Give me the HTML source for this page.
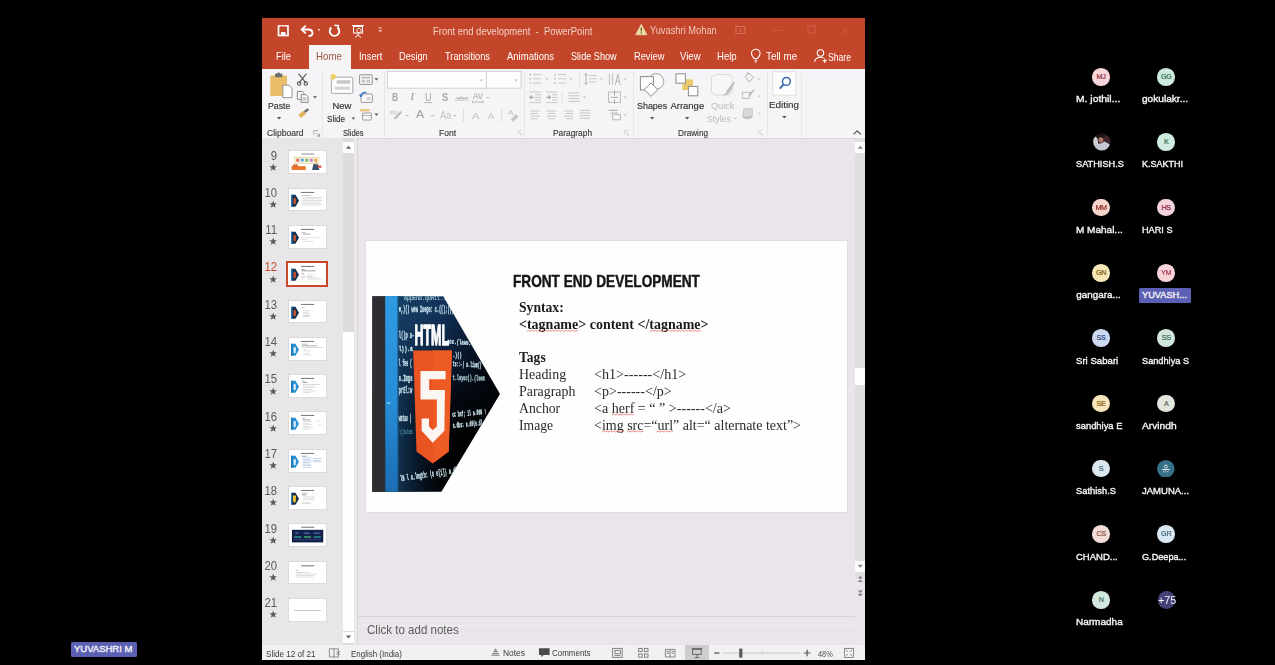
<!DOCTYPE html>
<html>
<head>
<meta charset="utf-8">
<title>Meeting</title>
<style>
html,body{margin:0;padding:0;background:#000;}
body{width:1275px;height:665px;overflow:hidden;position:relative;font-family:"Liberation Sans",sans-serif;}
.abs{position:absolute;}
.t{position:absolute;white-space:nowrap;line-height:1;transform-origin:0 50%;}
#win{position:absolute;left:262.4px;top:18.2px;width:602.6px;height:641.6px;background:#e9e5ea;overflow:hidden;filter:blur(0.5px);}
#titlebar{position:absolute;left:0;top:0;width:603px;height:50.6px;background:#c4462a;}
#hometab{position:absolute;left:47px;top:26.4px;width:41.6px;height:25px;background:#f6f4f5;}
#ribbon{position:absolute;left:0;top:50.6px;width:603px;height:69.4px;background:linear-gradient(#f4f5f8,#f6f4f6 40%);border-bottom:1px solid #dad7da;}
.tab{color:#fff;font-size:10.5px;}
.rl{color:#333;-webkit-text-stroke:0.15px #333;font-size:9.5px;}
.rlg{color:#b3b0b0;font-size:9.5px;}
.gl{color:#444;font-size:9px;}
.sep{position:absolute;top:54px;width:1px;height:64px;background:#dcdadb;}
.num{position:absolute;color:#606060;font-size:12px;line-height:1;}
.star{position:absolute;color:#666;font-size:9px;line-height:1;}
.th{position:absolute;left:27px;width:36px;height:20px;background:#fff;border:1px solid #d8d8d8;box-sizing:border-box;overflow:hidden;}
.st{position:absolute;color:#333;font-size:8.5px;line-height:1;white-space:nowrap;}
.pn{position:absolute;color:#fff;font-size:10px;line-height:1;white-space:nowrap;font-weight:bold;letter-spacing:0.1px;}
.av{position:absolute;width:18px;height:18px;border-radius:50%;font-size:6px;line-height:18px;text-align:center;color:#555;}
.serif{font-family:"Liberation Serif",serif;}
u{text-decoration:underline wavy #e0443a;text-decoration-thickness:0.8px;text-underline-offset:1.5px;}
</style>
</head>
<body>

<div id="win">
  <div id="titlebar"></div>
  <div id="hometab"></div>
  <div id="ribbon"></div>
  
  <!-- title bar icons -->
  <svg class="abs" style="left:0;top:0" width="603" height="50" viewBox="0 0 603 50">
    <!-- save -->
    <g fill="none" stroke="#fff" stroke-width="1.7">
      <rect x="16.5" y="8" width="9.5" height="9.5"/>
      <rect x="19" y="14" width="4.5" height="3.5" fill="#fff" stroke="none"/>
      <rect x="18" y="8.5" width="6.5" height="3" fill="#c3452a" stroke="none"/>
    </g>
    <!-- undo -->
    <path d="M40.5 11.5 L46 11.5 Q50.5 11.5 50.5 15 Q50.5 18 46.5 18" fill="none" stroke="#fff" stroke-width="1.9"/>
    <path d="M43.8 7.6 L39.8 11.5 L43.8 15.4" fill="none" stroke="#fff" stroke-width="1.9"/>
    <path d="M55.5 11 L58.5 11 L57 13 Z" fill="#f3d6cf"/>
    <!-- redo circle -->
    <path d="M75.6 9.4 A4.8 4.8 0 1 1 69.4 9.4" fill="none" stroke="#fff" stroke-width="1.9"/>
    <path d="M72.4 7.2 L76.4 7.6 L75.8 11.4" fill="none" stroke="#fff" stroke-width="1.6"/>
    <!-- present -->
    <g stroke="#fff" fill="none" stroke-width="1">
      <path d="M90 7.5 H102"/>
      <rect x="91.5" y="8.5" width="9" height="6.5"/>
      <path d="M96 15 V17 M93 19.5 L96 17 L99 19.5"/>
      <circle cx="97" cy="12.5" r="2.2" stroke-width="0.8"/>
    </g>
    <path d="M116.5 12 L120 12 L118.2 14.2 Z" fill="#f1cfc6"/>
    <rect x="116.5" y="9.5" width="3.5" height="1" fill="#f1cfc6"/>
    <!-- warning -->
    <path d="M379.3 6.2 L385 16.8 L373.6 16.8 Z" fill="#eadfa6" stroke="#f3e9c8" stroke-width="0.5"/>
    <rect x="378.7" y="9.5" width="1.3" height="4" fill="#7a5a28"/>
    <rect x="378.7" y="14.3" width="1.3" height="1.3" fill="#7a5a28"/>
    <!-- window buttons (faint) -->
    <g stroke="#d4705a" fill="none" stroke-width="1">
      <rect x="474" y="8.5" width="9" height="7"/>
      <path d="M478.5 10.5 V14"/>
      <path d="M511 12.5 H520" stroke="#cc5a42"/>
      <rect x="546" y="8" width="7" height="7" stroke="#cf6048"/>
      <path d="M580 9.5 L586 15.5 M586 9.5 L580 15.5" stroke="#cc5a42"/>
    </g>
    <!-- bulb -->
    <g stroke="#fff" fill="none" stroke-width="1.1">
      <path d="M492.2 40.5 Q489.5 38 489.5 35.5 A4.3 4.3 0 0 1 498.1 35.5 Q498.1 38 495.4 40.5 Z"/>
      <path d="M492.4 42.3 H495.2 M492.8 44 H494.8"/>
    </g>
    <!-- share person -->
    <g stroke="#fff" fill="none" stroke-width="1.1">
      <circle cx="558.5" cy="35" r="3.2"/>
      <path d="M552.5 44 Q553.5 39.2 558.5 39.2 Q560.5 39.2 561.5 40"/>
      <path d="M562.8 40.5 V45 M560.5 42.7 H565"/>
    </g>
  </svg>
  <span class="t" id="tt1" style="left:171px;top:8.7px;font-size:10px;transform:scaleX(0.946);color:#f3cfc6;">Front end development&nbsp; -&nbsp; PowerPoint</span>
  <span class="t" id="tt2" style="left:388px;top:8.3px;font-size:10px;transform:scaleX(0.931);color:#f0c8bd;">Yuvashri Mohan</span>
  <span class="t" id="tb1" style="left:14px;top:32.8px;font-size:10.5px;transform:scaleX(0.882);color:#fff;">File</span>
  <span class="t" id="tb2" style="left:54px;top:32.8px;font-size:10.5px;transform:scaleX(0.929);color:#9c5444;">Home</span>
  <span class="t" id="tb3" style="left:97px;top:32.8px;font-size:10.5px;transform:scaleX(0.885);color:#fff;">Insert</span>
  <span class="t" id="tb4" style="left:137px;top:32.8px;font-size:10.5px;transform:scaleX(0.879);color:#fff;">Design</span>
  <span class="t" id="tb5" style="left:183px;top:32.8px;font-size:10.5px;transform:scaleX(0.882);color:#fff;">Transitions</span>
  <span class="t" id="tb6" style="left:245px;top:32.8px;font-size:10.5px;transform:scaleX(0.904);color:#fff;">Animations</span>
  <span class="t" id="tb7" style="left:309px;top:32.8px;font-size:10.5px;transform:scaleX(0.868);color:#fff;">Slide Show</span>
  <span class="t" id="tb8" style="left:372px;top:32.8px;font-size:10.5px;transform:scaleX(0.882);color:#fff;">Review</span>
  <span class="t" id="tb9" style="left:418px;top:32.8px;font-size:10.5px;transform:scaleX(0.913);color:#fff;">View</span>
  <span class="t" id="tb10" style="left:455px;top:32.8px;font-size:10.5px;transform:scaleX(0.909);color:#fff;">Help</span>
  <span class="t" id="tb11" style="left:504px;top:32.8px;font-size:10.5px;transform:scaleX(0.939);color:#fff;">Tell me</span>
  <span class="t" id="tb12" style="left:566px;top:33.8px;font-size:10.5px;transform:scaleX(0.821);color:#fff;">Share</span>
  
  <!-- ribbon icons: drawn in absolute page coords, shifted by window origin -->
  <svg class="abs" style="left:0;top:0" width="603" height="125" viewBox="262 18 603 125">
    <g id="clip">
      <rect x="270.2" y="75.5" width="16.8" height="20.5" rx="1" fill="#e9bf6b"/>
      <rect x="275" y="73.6" width="7.4" height="3.6" rx="1" fill="#6f6f6f"/>
      <rect x="277.4" y="72.6" width="2.6" height="2" rx="1" fill="#6f6f6f"/>
      <path d="M282.8 85.2 H289 L292 88.2 V97.6 H282.8 Z" fill="#fff" stroke="#8c8c8c" stroke-width="0.9"/>
      <path d="M276.8 117 L281.2 117 L279 119.4 Z" fill="#555"/>
      <!-- scissors -->
      <g stroke="#5a5a5a" fill="none" stroke-width="1.1">
        <path d="M298.6 73.6 L305.8 82.8 M306.4 73.6 L299.2 82.8"/>
        <circle cx="299.2" cy="83.6" r="1.7"/><circle cx="305.8" cy="83.6" r="1.7"/>
      </g>
      <!-- copy -->
      <g stroke="#7a7a7a" fill="#fbfbfb" stroke-width="0.9">
        <path d="M297.4 91.4 H302.2 L304 93.2 V99.4 H297.4 Z"/>
        <path d="M301.2 94.6 H306 L308 96.6 V102.4 H301.2 Z"/>
        <path d="M302.6 98 H306.4 M302.6 100 H306.4" stroke-width="0.7"/>
      </g>
      <path d="M313 96.2 L317 96.2 L315 98.6 Z" fill="#555"/>
      <!-- format painter -->
      <path d="M298.4 114.6 L303.6 110.8 L306 114 L300.8 118 Z" fill="#e4b55f"/>
      <path d="M303.8 111 L307.6 108.2 L309 110 L305.4 113 Z" fill="#6a6a6a"/>
      <!-- launcher -->
      <path d="M313.8 130.6 H318.4 M313.8 130.6 V135" stroke="#9a9a9a" stroke-width="0.8" fill="none"/>
      <path d="M316.2 133 L319.4 136 M319.6 133.6 V136.2 H317" stroke="#8a8a8a" stroke-width="0.8" fill="none"/>
    </g>
    <g id="slidesg">
      <rect x="331.4" y="77.2" width="21.4" height="16.2" rx="1.2" fill="#fdfdfd" stroke="#a9a9a9" stroke-width="1"/>
      <rect x="336.6" y="80.2" width="13.6" height="3.6" fill="#c9c9c9"/>
      <rect x="334.6" y="86.6" width="15.6" height="3.2" fill="#d6d6d6"/>
      <path d="M333.2 72.6 L334.2 75 L336.8 74.4 L335.4 76.6 L337 78.6 L334.4 78.6 L333.2 81 L332.2 78.6 L329.6 78.6 L331.2 76.6 L329.8 74.4 L332.4 75 Z" fill="#ecd064"/>
      <path d="M351.6 117.6 L355.2 117.6 L353.4 119.8 Z" fill="#555"/>
      <!-- layout -->
      <rect x="359.6" y="74.8" width="12.6" height="9.6" rx="0.8" fill="#fbfbfb" stroke="#8e8e8e" stroke-width="1"/>
      <rect x="361.6" y="76.8" width="8.6" height="1.6" fill="#b5b5b5"/>
      <rect x="361.6" y="79.6" width="3.6" height="3" fill="#c5c5c5"/><rect x="366.4" y="79.6" width="3.8" height="3" fill="#c5c5c5"/>
      <path d="M374.4 78.2 L378.4 78.2 L376.4 80.6 Z" fill="#555"/>
      <!-- reset -->
      <rect x="361" y="94" width="11.4" height="8.4" rx="0.8" fill="#fbfbfb" stroke="#9a9a9a" stroke-width="1"/>
      <rect x="366.4" y="96.8" width="4.4" height="3.4" fill="#d5d5d5"/>
      <path d="M360.6 96.4 Q361.4 91.8 366.6 92.6" stroke="#3d7ec4" stroke-width="1.4" fill="none"/>
      <path d="M358.8 94.4 L360.6 97.6 L363.2 95.2 Z" fill="#3d7ec4"/>
      <!-- section -->
      <rect x="359.8" y="109.2" width="10" height="2.2" fill="#e8c57a"/>
      <rect x="362.6" y="113" width="8.8" height="7" rx="0.6" fill="#fbfbfb" stroke="#9a9a9a" stroke-width="1"/>
      <path d="M362.6 115.6 H371.4" stroke="#9a9a9a" stroke-width="0.8"/>
      <path d="M374.4 113.6 L378.4 113.6 L376.4 116 Z" fill="#555"/>
    </g>
    <g id="fontg">
      <rect x="387.4" y="71.4" width="99" height="16.8" fill="#fefefe" stroke="#d2d0d0" stroke-width="1"/>
      <rect x="486.4" y="71.4" width="34.6" height="16.8" fill="#fefefe" stroke="#d2d0d0" stroke-width="1"/>
      <path d="M479.6 79.4 L483 79.4 L481.3 81.4 Z" fill="#bdbdbd"/>
      <path d="M514.4 79.4 L517.8 79.4 L516.1 81.4 Z" fill="#bdbdbd"/>
      <path d="M457 98.4 H467.6" stroke="#b4b4b4" stroke-width="0.9"/>
      <path d="M472.6 102 H483 M472.6 100.6 V103.4 M483 100.6 V103.4" stroke="#a8a8a8" stroke-width="0.8" fill="none"/>
      <path d="M486.2 97.6 H489.6" stroke="#c4c4c4" stroke-width="1"/>
      <path d="M424.4 102.6 H432.4" stroke="#b0b0b0" stroke-width="0.9"/>
      <!-- highlighter -->
      <path d="M393.4 118.6 L400.6 111 L402 112.6 L395.8 119.2 Z" fill="#b9b9b9"/>
      <path d="M405.6 115.6 H408.6 M430.6 115.6 H434 M453.6 115.6 H456.2" stroke="#bdbdbd" stroke-width="1"/>
      <path d="M463.4 109 V122 M501.6 109 V122" stroke="#dedcdc" stroke-width="1"/>
      <path d="M510.6 119.6 L516 114 L518.6 116.4 L513.4 122 Z" fill="#c9c9c9"/>
      <path d="M518.4 130.6 H521.4 M518.4 130.6 V134" stroke="#c8c8c8" stroke-width="0.8" fill="none"/>
      <path d="M520 133 L522.4 135.4" stroke="#bbb" stroke-width="0.9"/>
    </g>
  </svg>
  <div class="abs" id="pg" style="left:-262px;top:-18px;width:0;height:0;">
  <span class="t" id="rl1" style="left:268px;top:100.8px;font-size:9.5px;transform:scaleX(0.917);color:#333;-webkit-text-stroke:0.15px #333;">Paste</span>
  <span class="t" id="rl2" style="left:267px;top:129.0px;font-size:9px;transform:scaleX(0.949);color:#3a3a3a;-webkit-text-stroke:0.15px #3a3a3a;">Clipboard</span>
  <span class="t" id="rl3" style="left:332px;top:100.8px;font-size:9.5px;transform:scaleX(1.000);color:#333;-webkit-text-stroke:0.15px #333;">New</span>
  <span class="t" id="rl4" style="left:327px;top:113.8px;font-size:9.5px;transform:scaleX(0.857);color:#333;-webkit-text-stroke:0.15px #333;">Slide</span>
  <span class="t" id="rl5" style="left:343px;top:129.0px;font-size:9px;transform:scaleX(0.840);color:#3a3a3a;-webkit-text-stroke:0.15px #3a3a3a;">Slides</span>
  <span class="t" id="rl6" style="left:439px;top:129.0px;font-size:9px;transform:scaleX(0.944);color:#3a3a3a;-webkit-text-stroke:0.15px #3a3a3a;">Font</span>
  <span class="t" id="fb1" style="left:391.9px;top:92.1px;font-size:11.4px;transform:scaleX(0.738);color:#a9a9a9;font-weight:bold;">B</span>
  <span class="t" id="fb2" style="left:410px;top:92.8px;font-size:9.5px;transform:scaleX(1.000);color:#a9a9a9;font-style:italic;font-family:'Liberation Serif',serif;font-weight:bold;">I</span>
  <span class="t" id="fb3" style="left:424.6px;top:91.9px;font-size:11px;transform:scaleX(0.850);color:#a9a9a9;">U</span>
  <span class="t" id="fb4" style="left:441.5px;top:92.6px;font-size:10px;transform:scaleX(0.929);color:#a9a9a9;font-weight:bold;">S</span>
  <span class="t" id="fb5" style="left:455px;top:94.6px;font-size:8px;transform:scaleX(1.077);color:#bcbcbc;">abc</span>
  <span class="t" id="fb6" style="left:472.6px;top:91.8px;font-size:8.5px;transform:scaleX(0.945);color:#a4a4a4;">AV</span>
  <span class="t" id="fb7" style="left:390px;top:108.6px;font-size:6px;transform:scaleX(0.800);color:#b8b8b8;">aby</span>
  <span class="t" id="fb8" style="left:416px;top:108.8px;font-size:11.5px;transform:scaleX(1.075);color:#9e9e9e;">A</span>
  <span class="t" id="fb9" style="left:439.6px;top:110.6px;font-size:10px;transform:scaleX(0.917);color:#c2c2c2;">Aa</span>
  <span class="t" id="fb10" style="left:471.4px;top:111.2px;font-size:9.5px;transform:scaleX(1.167);color:#b4b4b4;">A</span>
  <span class="t" id="fb11" style="left:488px;top:112.2px;font-size:8.5px;transform:scaleX(1.100);color:#b8b8b8;">A</span>
  <span class="t" id="fb12" style="left:508px;top:108.8px;font-size:7.5px;transform:scaleX(1.120);color:#bdbdbd;">A</span>
  <span class="t" id="rl7" style="left:553px;top:129.0px;font-size:9px;transform:scaleX(0.929);color:#3a3a3a;-webkit-text-stroke:0.15px #3a3a3a;">Paragraph</span>
  <span class="t" id="rl8" style="left:678px;top:129.0px;font-size:9px;transform:scaleX(0.909);color:#3a3a3a;-webkit-text-stroke:0.15px #3a3a3a;">Drawing</span>
  <span class="t" id="rl9" style="left:637px;top:100.8px;font-size:9.5px;transform:scaleX(0.938);color:#333;-webkit-text-stroke:0.15px #333;">Shapes</span>
  <span class="t" id="rl10" style="left:670px;top:100.8px;font-size:9.5px;transform:scaleX(1.000);color:#333;-webkit-text-stroke:0.15px #333;">Arrange</span>
  <span class="t" id="rl11" style="left:711px;top:100.8px;font-size:9.5px;transform:scaleX(0.958);color:#bdbbbb;">Quick</span>
  <span class="t" id="rl12" style="left:707px;top:113.8px;font-size:9.5px;transform:scaleX(0.923);color:#bdbbbb;">Styles</span>
  <span class="t" id="rl13" style="left:769px;top:99.8px;font-size:9.5px;transform:scaleX(1.034);color:#333;-webkit-text-stroke:0.15px #333;">Editing</span>
  <!--RIBBONTEXT-->
  </div>

  <svg class="abs" style="left:0;top:0" width="603" height="125" viewBox="262 18 603 125">
    <g id="parag" stroke="#c3c3c3" stroke-width="0.9" fill="none">
      <!-- bullets -->
      <path d="M533 74.6 H541.2 M533 78.8 H541.2 M533 83 H541.2"/>
      <path d="M529.6 74.6 H531 M529.6 78.8 H531 M529.6 83 H531" stroke="#b0b0b0" stroke-width="1.2"/>
      <path d="M545.6 78.4 L548.6 78.4 L547.1 80.2 Z" fill="#c4c4c4" stroke="none"/>
      <!-- numbering -->
      <path d="M558 74.6 H566.4 M558 78.8 H566.4 M558 83 H566.4"/>
      <path d="M555 73.6 V75.8 M555 77.8 V80 M555 82 V84.2" stroke="#b5b5b5" stroke-width="1"/>
      <path d="M569.6 78.4 L572.6 78.4 L571.1 80.2 Z" fill="#c4c4c4" stroke="none"/>
      <path d="M579.6 72 V87 M562 91 V103" stroke="#e3e1e1" stroke-width="1"/>
      <!-- line spacing -->
      <path d="M589 75.6 H596.4 M589 78.8 H596.4 M589 82 H596.4"/>
      <path d="M586 73.6 V84.4 M584.6 75.2 L586 73.6 L587.4 75.2 M584.6 82.8 L586 84.4 L587.4 82.8" stroke="#a8a8a8"/>
      <path d="M600 78.4 L603 78.4 L601.5 80.2 Z" fill="#c4c4c4" stroke="none"/>
      <!-- text direction -->
      <path d="M609.4 73.4 V85 M612.6 73.4 V85" stroke="#b8b8b8"/>
      <path d="M615.4 85 L617.8 74.2 L620.2 85 M616.2 81.4 H619.4" stroke="#b0b0b0"/>
      <path d="M623.4 78.4 L626.4 78.4 L624.9 80.2 Z" fill="#c4c4c4" stroke="none"/>
      <!-- indents -->
      <path d="M529.6 92 H541 M535 94.8 H541 M535 97.4 H541 M535 100 H541 M529.6 102.6 H541"/>
      <path d="M534 97.2 H530 M531.8 95.4 L530 97.2 L531.8 99" stroke="#a5a5a5" stroke-width="1.1"/>
      <path d="M545.8 92 H557.4 M552 94.8 H557.4 M552 97.4 H557.4 M552 100 H557.4 M545.8 102.6 H557.4"/>
      <path d="M546 97.2 H550.4 M548.6 95.4 L550.4 97.2 L548.6 99" stroke="#a5a5a5" stroke-width="1.1"/>
      <!-- align dropdown -->
      <path d="M568.4 93 H579.4 M568.4 95.8 H579.4 M568.4 98.6 H579.4 M568.4 101.4 H579.4"/>
      <path d="M583 96.6 L586 96.6 L584.5 98.4 Z" fill="#c4c4c4" stroke="none"/>
      <!-- align text -->
      <rect x="608.6" y="92" width="11.8" height="10.4" stroke="#b4b4b4"/>
      <path d="M614.5 90.6 V95.4 M614.5 104 V99.4 M611 97.4 H618" stroke="#a0a0a0"/>
      <path d="M623.4 96.6 L626.4 96.6 L624.9 98.4 Z" fill="#c4c4c4" stroke="none"/>
      <!-- row 3 aligns -->
      <path d="M530.4 111 H540 M530.4 113.6 H537.6 M530.4 116.2 H540 M530.4 118.8 H537.6"/>
      <path d="M546.4 111 H556.6 M548 113.6 H555 M546.4 116.2 H556.6 M548 118.8 H555"/>
      <path d="M563.6 111 H573 M566 113.6 H573 M563.6 116.2 H573 M566 118.8 H573"/>
      <path d="M579.4 110.4 H590 M579.4 113 H590 M579.4 115.6 H590 M579.4 118.2 H590"/>
      <!-- smartart -->
      <path d="M608.6 110.4 H617.6 M610.4 113 H617.6" stroke="#b8b8b8" stroke-width="1.1"/>
      <rect x="612.6" y="114.4" width="7.8" height="5.4" stroke="#b4b4b4" fill="#f8f8f8"/>
      <path d="M623.4 114.4 L626.4 114.4 L624.9 116.2 Z" fill="#c4c4c4" stroke="none"/>
      <path d="M624.6 130.6 H628.2 M624.6 130.6 V134" stroke="#cacaca" stroke-width="0.8"/>
      <path d="M626.4 133 L629 135.6" stroke="#bbb"/>
    </g>
    <g id="drawg">
      <circle cx="656" cy="81.4" r="7.8" fill="#fbfbfb" stroke="#a2a2a2" stroke-width="1"/>
      <rect x="640.4" y="76.6" width="13" height="13.4" fill="#fcfcfc" stroke="#8a8a8a" stroke-width="1"/>
      <path d="M651 83 L657.8 89.6 L651 96.4 L644.2 89.6 Z" fill="#fdfdfd" stroke="#8a8a8a" stroke-width="1"/>
      <path d="M650 117 L654.4 117 L652.2 119.4 Z" fill="#555"/>
      <!-- arrange -->
      <rect x="682.4" y="79.4" width="10.6" height="10.6" fill="#ecc968"/>
      <rect x="676" y="73.8" width="9.4" height="9.4" fill="#fdfdfd" stroke="#8e8e8e" stroke-width="1"/>
      <rect x="688.4" y="86.4" width="9.4" height="9.4" fill="#fdfdfd" stroke="#8e8e8e" stroke-width="1"/>
      <path d="M685 117 L689.4 117 L687.2 119.4 Z" fill="#555"/>
      <!-- quick styles -->
      <rect x="711.4" y="74.6" width="21" height="20.4" rx="4.5" fill="#f7f6f6" stroke="#dad8d8" stroke-width="1"/>
      <path d="M722.4 95.6 Q726 93.4 727.6 89.6 L733.6 81.4 L735 82.6 L730.4 91.6 Q728 95.4 722.4 95.6 Z" fill="#c2c0c0"/>
      <path d="M733.8 117.8 L736.8 117.8 L735.3 119.6 Z" fill="#c0c0c0"/>
      <!-- fill / outline / effects -->
      <path d="M745.4 76.6 L749 73 L753.6 77.6 L749 82 Z" fill="none" stroke="#b4b4b4" stroke-width="1"/>
      <path d="M747.4 72 V75" stroke="#b4b4b4" stroke-width="1"/>
      <path d="M742.4 92.4 H751.4 L749 98.4 H742.4 Z" fill="none" stroke="#bcbcbc" stroke-width="1"/>
      <path d="M748 95 L753.6 89 L754.8 90.2 L749.6 96.4 Z" fill="#c0c0c0"/>
      <path d="M744 108.6 H752.4 V115.6 Q747 119.6 742.6 115.6 Z" fill="#d8d8d8" stroke="#c4c4c4" stroke-width="0.8"/>
      <path d="M742.6 115.6 Q747 118 752.4 115.6 V117.4 Q747 120.6 742.6 117.4 Z" fill="#bdbdbd"/>
      <path d="M757.6 78.4 L760.6 78.4 L759.1 80.2 Z M757.6 95.4 L760.6 95.4 L759.1 97.2 Z M757.6 112.8 L760.6 112.8 L759.1 114.6 Z" fill="#c6c6c6"/>
      <path d="M758.4 130.6 H762 M758.4 130.6 V134" stroke="#cacaca" stroke-width="0.8" fill="none"/>
      <path d="M760.2 133 L762.8 135.6" stroke="#bbb" stroke-width="0.9"/>
      <!-- editing -->
      <rect x="772.8" y="71.8" width="23.2" height="23.4" fill="#fefefe" stroke="#e0dede" stroke-width="1"/>
      <circle cx="786.4" cy="81.4" r="3.9" fill="none" stroke="#3a6aa8" stroke-width="1.5"/>
      <path d="M783.6 84.4 L779.8 88.6" stroke="#3a6aa8" stroke-width="1.9"/>
      <path d="M782.2 116 L786.6 116 L784.4 118.4 Z" fill="#555"/>
      <path d="M853.6 134.4 L857.2 130.8 L860.8 134.4" fill="none" stroke="#555" stroke-width="1.2"/>
    </g>
    <g stroke="#e8e6e6" stroke-width="1">
      <path d="M322.5 72 V137 M384.5 72 V137 M524.5 72 V137 M633.5 72 V137 M767.5 72 V137 M801.5 72 V137"/>
    </g>
  </svg>
  <!--RIBBONCONTENT-->
  <div class="abs" id="pg2" style="left:-262px;top:-18px;width:0;height:0;">
  <div class="abs" style="left:262px;top:138px;width:81px;height:507px;background:#e9e6ea;"></div>
  <div class="abs" style="left:343px;top:138px;width:11px;height:507px;background:#dddbde;"></div>
  <div class="abs" style="left:354px;top:138px;width:3px;height:507px;background:#ebe9ea;"></div>
  <div class="abs" style="left:357px;top:138px;width:1px;height:507px;background:#d9d7d8;"></div>
  <div class="abs" style="left:343px;top:142px;width:11px;height:10.5px;background:#fdfdfd;"></div>
  <div class="abs" style="left:343px;top:332px;width:11px;height:298.5px;background:#fefefe;"></div>
  <div class="abs" style="left:343px;top:632px;width:11px;height:10.5px;background:#fdfdfd;"></div>
  <svg class="abs" style="left:343px;top:142px" width="11" height="501" viewBox="0 0 11 501"><path d="M2.8 6.8 L5.5 3.8 L8.2 6.8 Z M2.8 493.6 L8.2 493.6 L5.5 496.6 Z" fill="#666"/></svg>
  <div class="abs" style="left:854.5px;top:138px;width:10.5px;height:440px;background:#dfdde0;"></div>
  <div class="abs" style="left:854.5px;top:142px;width:10.5px;height:10.5px;background:#fdfdfd;"></div>
  <div class="abs" style="left:854.5px;top:367.5px;width:10.5px;height:17px;background:#fefefe;"></div>
  <div class="abs" style="left:854.5px;top:561px;width:10.5px;height:10.5px;background:#fdfdfd;"></div>
  <svg class="abs" style="left:854.5px;top:142px" width="11" height="460" viewBox="0 0 11 460"><path d="M2.6 6.8 L5.3 3.8 L8 6.8 Z M2.6 422.8 L8 422.8 L5.3 425.8 Z" fill="#8a8a8a"/><path d="M2.8 436.6 L5.3 434 L7.8 436.6 Z M2.8 440 L5.3 437.4 L7.8 440 Z M2.8 448.4 L7.8 448.4 L5.3 451 Z M2.8 451.8 L7.8 451.8 L5.3 454.4 Z" fill="#7d7d7d"/></svg>
  <span class="num" style="right:-276.8px;transform:scaleX(0.9);transform-origin:100% 50%;font-size:12.6px;top:149.4px;color:#5a5a5a;">9</span>
  <svg class="abs" style="left:268.3px;top:162.6px" width="8.4" height="8.4" viewBox="0 0 10 10"><path d="M5 0.6 L6.2 3.8 L9.6 3.9 L6.9 6 L7.9 9.3 L5 7.4 L2.1 9.3 L3.1 6 L0.4 3.9 L3.8 3.8 Z" fill="#5a5a5a"/></svg>
  <svg class="abs" style="left:288.3px;top:151.2px;background:#fff;outline:0.6px solid #dcdadb;" width="37.2" height="21.8" viewBox="0 0 38 22.5" preserveAspectRatio="none"><rect x="13" y="2.6" width="13" height="1" fill="#8a8a8a"/><rect x="5.6" y="6.4" width="25" height="6.4" fill="#f7f3e6" stroke="#d9c46a" stroke-width="0.5"/><rect x="7.4" y="8" width="3" height="3" fill="#e46a5a"/><rect x="12" y="8" width="3" height="3" fill="#58a7d8"/><rect x="16.6" y="8" width="3" height="3" fill="#76b86a"/><rect x="21.2" y="8" width="3" height="3" fill="#c77ab8"/><rect x="25.8" y="8" width="3" height="3" fill="#e5a33e"/><rect x="2.6" y="15.6" width="14.5" height="4" fill="#e8762f"/><rect x="4" y="14" width="5" height="2" fill="#d2602a"/><path d="M25 13.4 L29.4 13.4 L31 19.6 L23.6 19.6 Z" fill="#36506e"/><circle cx="27.6" cy="12.8" r="1.3" fill="#e9b08d"/><rect x="29.4" y="15" width="3.6" height="2.4" fill="#d8524a"/></svg>
  <span class="num" style="right:-276.8px;transform:scaleX(0.9);transform-origin:100% 50%;font-size:12.6px;top:186.7px;color:#5a5a5a;">10</span>
  <svg class="abs" style="left:268.3px;top:199.9px" width="8.4" height="8.4" viewBox="0 0 10 10"><path d="M5 0.6 L6.2 3.8 L9.6 3.9 L6.9 6 L7.9 9.3 L5 7.4 L2.1 9.3 L3.1 6 L0.4 3.9 L3.8 3.8 Z" fill="#5a5a5a"/></svg>
  <svg class="abs" style="left:288.3px;top:188.5px;background:#fff;outline:0.6px solid #dcdadb;" width="37.2" height="21.8" viewBox="0 0 38 22.5" preserveAspectRatio="none"><path d="M2.2 6 H6.6 L10.2 12.2 L6.6 18.4 H2.2 Z" fill="#17314f"/><path d="M2.2 6 H3.4 V18.4 H2.2 Z" fill="#2a84c8"/><path d="M4.6 9.6 H7 L6.8 14.8 L5.8 15.8 L4.8 14.8 Z" fill="#e2572c"/><rect x="12.2" y="3" width="13.5" height="1.1" fill="#7d7d7d"/><rect x="13" y="6.4" width="9" height="0.7" fill="#a5a5a5"/><rect x="13" y="8.2" width="21" height="0.7" fill="#d2d2d2"/><rect x="13" y="9.8" width="20" height="0.7" fill="#d2d2d2"/><rect x="13" y="11.4" width="21" height="0.7" fill="#d2d2d2"/><rect x="13" y="13" width="19" height="0.7" fill="#d2d2d2"/><rect x="13" y="14.6" width="20" height="0.7" fill="#d2d2d2"/><rect x="13" y="16.2" width="14" height="0.7" fill="#d2d2d2"/><rect x="26" y="16.2" width="8" height="0.7" fill="#d2d2d2"/></svg>
  <span class="num" style="right:-276.8px;transform:scaleX(0.9);transform-origin:100% 50%;font-size:12.6px;top:224.0px;color:#5a5a5a;">11</span>
  <svg class="abs" style="left:268.3px;top:237.2px" width="8.4" height="8.4" viewBox="0 0 10 10"><path d="M5 0.6 L6.2 3.8 L9.6 3.9 L6.9 6 L7.9 9.3 L5 7.4 L2.1 9.3 L3.1 6 L0.4 3.9 L3.8 3.8 Z" fill="#5a5a5a"/></svg>
  <svg class="abs" style="left:288.3px;top:225.8px;background:#fff;outline:0.6px solid #dcdadb;" width="37.2" height="21.8" viewBox="0 0 38 22.5" preserveAspectRatio="none"><path d="M2.2 6 H6.6 L10.2 12.2 L6.6 18.4 H2.2 Z" fill="#17314f"/><path d="M2.2 6 H3.4 V18.4 H2.2 Z" fill="#2a84c8"/><path d="M4.6 9.6 H7 L6.8 14.8 L5.8 15.8 L4.8 14.8 Z" fill="#e2572c"/><rect x="12.2" y="3" width="13.5" height="1.1" fill="#7d7d7d"/><rect x="13" y="6.2" width="4" height="0.7" fill="#a5a5a5"/><rect x="14.5" y="8" width="7.5" height="0.7" fill="#858585"/><rect x="13" y="11.8" width="18" height="0.7" fill="#d2d2d2"/><rect x="13" y="13.6" width="6" height="0.7" fill="#d2d2d2"/><rect x="13" y="15.4" width="12" height="0.7" fill="#d2d2d2"/></svg>
  <span class="num" style="right:-276.8px;transform:scaleX(0.9);transform-origin:100% 50%;font-size:12.6px;top:261.3px;color:#c9472b;">12</span>
  <svg class="abs" style="left:268.3px;top:274.5px" width="8.4" height="8.4" viewBox="0 0 10 10"><path d="M5 0.6 L6.2 3.8 L9.6 3.9 L6.9 6 L7.9 9.3 L5 7.4 L2.1 9.3 L3.1 6 L0.4 3.9 L3.8 3.8 Z" fill="#5a5a5a"/></svg>
  <div class="abs" style="left:286px;top:260.8px;width:41.6px;height:25.6px;border:2.2px solid #c9472b;box-sizing:border-box;background:#fff;"></div>
  <svg class="abs" style="left:288.3px;top:263.1px;background:#fff;" width="37.2" height="21.8" viewBox="0 0 38 22.5" preserveAspectRatio="none"><path d="M2.2 6 H6.6 L10.2 12.2 L6.6 18.4 H2.2 Z" fill="#17314f"/><path d="M2.2 6 H3.4 V18.4 H2.2 Z" fill="#2a84c8"/><path d="M4.6 9.6 H7 L6.8 14.8 L5.8 15.8 L4.8 14.8 Z" fill="#e2572c"/><rect x="12.2" y="3" width="13.5" height="1.1" fill="#7d7d7d"/><rect x="12.6" y="6.2" width="3.6" height="0.7" fill="#7d7d7d"/><rect x="12.6" y="7.8" width="14.5" height="0.7" fill="#777"/><rect x="12.6" y="10.6" width="2.6" height="0.7" fill="#8a8a8a"/><rect x="12.6" y="12" width="4" height="0.7" fill="#d2d2d2"/><rect x="18.4" y="12" width="7" height="0.7" fill="#d2d2d2"/><rect x="12.6" y="13.4" width="4.4" height="0.7" fill="#d2d2d2"/><rect x="18.4" y="13.4" width="6" height="0.7" fill="#d2d2d2"/><rect x="12.6" y="14.8" width="3.6" height="0.7" fill="#d2d2d2"/><rect x="18.4" y="14.8" width="10.6" height="0.7" fill="#d2d2d2"/><rect x="12.6" y="16.2" width="3.2" height="0.7" fill="#d2d2d2"/><rect x="18.4" y="16.2" width="16" height="0.7" fill="#d2d2d2"/></svg>
  <span class="num" style="right:-276.8px;transform:scaleX(0.9);transform-origin:100% 50%;font-size:12.6px;top:298.6px;color:#5a5a5a;">13</span>
  <svg class="abs" style="left:268.3px;top:311.8px" width="8.4" height="8.4" viewBox="0 0 10 10"><path d="M5 0.6 L6.2 3.8 L9.6 3.9 L6.9 6 L7.9 9.3 L5 7.4 L2.1 9.3 L3.1 6 L0.4 3.9 L3.8 3.8 Z" fill="#5a5a5a"/></svg>
  <svg class="abs" style="left:288.3px;top:300.4px;background:#fff;outline:0.6px solid #dcdadb;" width="37.2" height="21.8" viewBox="0 0 38 22.5" preserveAspectRatio="none"><path d="M2.2 6 H6.6 L10.2 12.2 L6.6 18.4 H2.2 Z" fill="#17314f"/><path d="M2.2 6 H3.4 V18.4 H2.2 Z" fill="#2a84c8"/><path d="M4.6 9.6 H7 L6.8 14.8 L5.8 15.8 L4.8 14.8 Z" fill="#e2572c"/><rect x="12.2" y="3" width="13.5" height="1.1" fill="#7d7d7d"/><rect x="13" y="6.6" width="3" height="0.7" fill="#a5a5a5"/><rect x="14" y="9.6" width="7" height="0.7" fill="#d2d2d2"/><rect x="14" y="11.2" width="6" height="0.7" fill="#d2d2d2"/><rect x="14" y="12.8" width="7" height="0.7" fill="#d2d2d2"/><rect x="14" y="14.4" width="8" height="0.7" fill="#bbb"/><rect x="14" y="16" width="7" height="0.7" fill="#d2d2d2"/></svg>
  <span class="num" style="right:-276.8px;transform:scaleX(0.9);transform-origin:100% 50%;font-size:12.6px;top:335.9px;color:#5a5a5a;">14</span>
  <svg class="abs" style="left:268.3px;top:349.1px" width="8.4" height="8.4" viewBox="0 0 10 10"><path d="M5 0.6 L6.2 3.8 L9.6 3.9 L6.9 6 L7.9 9.3 L5 7.4 L2.1 9.3 L3.1 6 L0.4 3.9 L3.8 3.8 Z" fill="#5a5a5a"/></svg>
  <svg class="abs" style="left:288.3px;top:337.7px;background:#fff;outline:0.6px solid #dcdadb;" width="37.2" height="21.8" viewBox="0 0 38 22.5" preserveAspectRatio="none"><path d="M2.2 6 H6.6 L10.2 12.2 L6.6 18.4 H2.2 Z" fill="#2b8fd2"/><path d="M2.2 6 H3.4 V18.4 H2.2 Z" fill="#1d6fb0"/><path d="M4.6 9.6 H7 L6.8 14.8 L5.8 15.8 L4.8 14.8 Z" fill="#e9f3fb"/><rect x="12.2" y="3" width="13.5" height="1.1" fill="#7d7d7d"/><rect x="13" y="6" width="6" height="0.7" fill="#a5a5a5"/><rect x="13" y="7.8" width="16" height="0.7" fill="#858585"/><rect x="13" y="9.6" width="22" height="0.7" fill="#d2d2d2"/><rect x="14.6" y="11.4" width="3" height="0.7" fill="#d2d2d2"/><rect x="14.6" y="13" width="8" height="0.7" fill="#d2d2d2"/><rect x="14.6" y="15.6" width="6" height="0.7" fill="#d2d2d2"/><rect x="14.6" y="17.2" width="8" height="0.7" fill="#d2d2d2"/></svg>
  <span class="num" style="right:-276.8px;transform:scaleX(0.9);transform-origin:100% 50%;font-size:12.6px;top:373.2px;color:#5a5a5a;">15</span>
  <svg class="abs" style="left:268.3px;top:386.4px" width="8.4" height="8.4" viewBox="0 0 10 10"><path d="M5 0.6 L6.2 3.8 L9.6 3.9 L6.9 6 L7.9 9.3 L5 7.4 L2.1 9.3 L3.1 6 L0.4 3.9 L3.8 3.8 Z" fill="#5a5a5a"/></svg>
  <svg class="abs" style="left:288.3px;top:375.0px;background:#fff;outline:0.6px solid #dcdadb;" width="37.2" height="21.8" viewBox="0 0 38 22.5" preserveAspectRatio="none"><path d="M2.2 6 H6.6 L10.2 12.2 L6.6 18.4 H2.2 Z" fill="#2b8fd2"/><path d="M2.2 6 H3.4 V18.4 H2.2 Z" fill="#1d6fb0"/><path d="M4.6 9.6 H7 L6.8 14.8 L5.8 15.8 L4.8 14.8 Z" fill="#e9f3fb"/><rect x="12.2" y="3" width="13.5" height="1.1" fill="#7d7d7d"/><rect x="13" y="6" width="3.4" height="0.7" fill="#a5a5a5"/><rect x="14" y="7.6" width="5" height="0.7" fill="#7d7d7d"/><rect x="14" y="9.4" width="14" height="0.7" fill="#d2d2d2"/><rect x="14" y="11" width="12" height="0.7" fill="#d2d2d2"/><rect x="14" y="12.6" width="13" height="0.7" fill="#d2d2d2"/><rect x="26" y="9.4" width="6" height="0.7" fill="#ccc"/><rect x="14" y="14.6" width="10" height="0.7" fill="#d2d2d2"/><rect x="14" y="16.2" width="13" height="0.7" fill="#d2d2d2"/><rect x="14" y="17.8" width="8" height="0.7" fill="#d2d2d2"/></svg>
  <span class="num" style="right:-276.8px;transform:scaleX(0.9);transform-origin:100% 50%;font-size:12.6px;top:410.5px;color:#5a5a5a;">16</span>
  <svg class="abs" style="left:268.3px;top:423.7px" width="8.4" height="8.4" viewBox="0 0 10 10"><path d="M5 0.6 L6.2 3.8 L9.6 3.9 L6.9 6 L7.9 9.3 L5 7.4 L2.1 9.3 L3.1 6 L0.4 3.9 L3.8 3.8 Z" fill="#5a5a5a"/></svg>
  <svg class="abs" style="left:288.3px;top:412.3px;background:#fff;outline:0.6px solid #dcdadb;" width="37.2" height="21.8" viewBox="0 0 38 22.5" preserveAspectRatio="none"><path d="M2.2 6 H6.6 L10.2 12.2 L6.6 18.4 H2.2 Z" fill="#2b8fd2"/><path d="M2.2 6 H3.4 V18.4 H2.2 Z" fill="#1d6fb0"/><path d="M4.6 9.6 H7 L6.8 14.8 L5.8 15.8 L4.8 14.8 Z" fill="#e9f3fb"/><rect x="12.2" y="3" width="13.5" height="1.1" fill="#7d7d7d"/><rect x="13" y="6" width="3.4" height="0.7" fill="#a5a5a5"/><rect x="14" y="7.8" width="8" height="0.7" fill="#858585"/><rect x="14" y="9.6" width="9" height="0.7" fill="#d2d2d2"/><rect x="14" y="11.2" width="7" height="0.7" fill="#d2d2d2"/><rect x="14" y="12.8" width="10" height="0.7" fill="#d2d2d2"/><rect x="14" y="14.4" width="8" height="0.7" fill="#d2d2d2"/><rect x="14" y="16" width="11" height="0.7" fill="#d2d2d2"/><rect x="14" y="17.6" width="6" height="0.7" fill="#d2d2d2"/><rect x="27" y="9" width="5" height="0.7" fill="#ddd"/><rect x="29" y="13" width="5" height="0.7" fill="#ddd"/></svg>
  <span class="num" style="right:-276.8px;transform:scaleX(0.9);transform-origin:100% 50%;font-size:12.6px;top:447.8px;color:#5a5a5a;">17</span>
  <svg class="abs" style="left:268.3px;top:461.0px" width="8.4" height="8.4" viewBox="0 0 10 10"><path d="M5 0.6 L6.2 3.8 L9.6 3.9 L6.9 6 L7.9 9.3 L5 7.4 L2.1 9.3 L3.1 6 L0.4 3.9 L3.8 3.8 Z" fill="#5a5a5a"/></svg>
  <svg class="abs" style="left:288.3px;top:449.6px;background:#fff;outline:0.6px solid #dcdadb;" width="37.2" height="21.8" viewBox="0 0 38 22.5" preserveAspectRatio="none"><path d="M2.2 6 H6.6 L10.2 12.2 L6.6 18.4 H2.2 Z" fill="#2b8fd2"/><path d="M2.2 6 H3.4 V18.4 H2.2 Z" fill="#1d6fb0"/><path d="M4.6 9.6 H7 L6.8 14.8 L5.8 15.8 L4.8 14.8 Z" fill="#e9f3fb"/><rect x="12.2" y="3" width="13.5" height="1.1" fill="#7d7d7d"/><rect x="13" y="6" width="5" height="0.7" fill="#7d7d7d"/><rect x="14" y="7.8" width="9" height="0.7" fill="#a9c3df"/><rect x="14" y="9.4" width="8" height="0.7" fill="#a9c3df"/><rect x="14" y="11" width="10" height="0.7" fill="#a9c3df"/><rect x="14" y="12.6" width="7" height="0.7" fill="#a9c3df"/><rect x="14" y="14.2" width="9" height="0.7" fill="#a9c3df"/><rect x="14" y="15.8" width="8" height="0.7" fill="#a9c3df"/><rect x="14" y="17.4" width="9" height="0.7" fill="#a9c3df"/><rect x="25" y="8.6" width="9" height="0.7" fill="#a9c3df"/><rect x="25" y="10.2" width="7" height="0.7" fill="#a9c3df"/><rect x="25" y="11.8" width="8" height="0.7" fill="#a9c3df"/></svg>
  <span class="num" style="right:-276.8px;transform:scaleX(0.9);transform-origin:100% 50%;font-size:12.6px;top:485.1px;color:#5a5a5a;">18</span>
  <svg class="abs" style="left:268.3px;top:498.3px" width="8.4" height="8.4" viewBox="0 0 10 10"><path d="M5 0.6 L6.2 3.8 L9.6 3.9 L6.9 6 L7.9 9.3 L5 7.4 L2.1 9.3 L3.1 6 L0.4 3.9 L3.8 3.8 Z" fill="#5a5a5a"/></svg>
  <svg class="abs" style="left:288.3px;top:486.9px;background:#fff;outline:0.6px solid #dcdadb;" width="37.2" height="21.8" viewBox="0 0 38 22.5" preserveAspectRatio="none"><path d="M2.2 6 H6.6 L10.2 12.2 L6.6 18.4 H2.2 Z" fill="#1a2a44"/><path d="M2.2 6 H3.4 V18.4 H2.2 Z" fill="#2a84c8"/><path d="M4 8.8 H7.2 L7 15 L5.6 16.2 L4.2 15 Z" fill="#efc52e"/><rect x="12.2" y="3" width="13.5" height="1.1" fill="#7d7d7d"/><rect x="13" y="6" width="6" height="0.7" fill="#a5a5a5"/><rect x="13" y="7.8" width="5" height="0.7" fill="#7d7d7d"/><rect x="14.6" y="9.8" width="12" height="0.7" fill="#d2d2d2"/><rect x="14.6" y="11.4" width="11" height="0.7" fill="#d2d2d2"/><rect x="14.6" y="13" width="12" height="0.7" fill="#d2d2d2"/><rect x="13" y="16.2" width="9" height="0.7" fill="#a5a5a5"/></svg>
  <span class="num" style="right:-276.8px;transform:scaleX(0.9);transform-origin:100% 50%;font-size:12.6px;top:522.4px;color:#5a5a5a;">19</span>
  <svg class="abs" style="left:268.3px;top:535.6px" width="8.4" height="8.4" viewBox="0 0 10 10"><path d="M5 0.6 L6.2 3.8 L9.6 3.9 L6.9 6 L7.9 9.3 L5 7.4 L2.1 9.3 L3.1 6 L0.4 3.9 L3.8 3.8 Z" fill="#5a5a5a"/></svg>
  <svg class="abs" style="left:288.3px;top:524.2px;background:#fff;outline:0.6px solid #dcdadb;" width="37.2" height="21.8" viewBox="0 0 38 22.5" preserveAspectRatio="none"><rect x="12.4" y="2.8" width="13.4" height="1.1" fill="#7d7d7d"/><rect x="3" y="6" width="32" height="13" fill="#14214a"/><rect x="6.4" y="9" width="3.6" height="0.8" fill="#6ea0d8"/><rect x="15" y="9" width="6" height="0.8" fill="#6ea0d8"/><rect x="25" y="9" width="7" height="0.8" fill="#6ea0d8"/><rect x="5.4" y="12.6" width="7" height="1.6" fill="#2f9a8a"/><rect x="15.4" y="12.6" width="7" height="1.6" fill="#3aa86a"/><rect x="25.4" y="12.6" width="7" height="1.6" fill="#2f8a9a"/><rect x="5.4" y="15.6" width="27" height="0.6" fill="#3a4f86"/></svg>
  <span class="num" style="right:-276.8px;transform:scaleX(0.9);transform-origin:100% 50%;font-size:12.6px;top:559.7px;color:#5a5a5a;">20</span>
  <svg class="abs" style="left:268.3px;top:572.9px" width="8.4" height="8.4" viewBox="0 0 10 10"><path d="M5 0.6 L6.2 3.8 L9.6 3.9 L6.9 6 L7.9 9.3 L5 7.4 L2.1 9.3 L3.1 6 L0.4 3.9 L3.8 3.8 Z" fill="#5a5a5a"/></svg>
  <svg class="abs" style="left:288.3px;top:561.5px;background:#fff;outline:0.6px solid #dcdadb;" width="37.2" height="21.8" viewBox="0 0 38 22.5" preserveAspectRatio="none"><rect x="12.4" y="3.4" width="13.4" height="1.1" fill="#7d7d7d"/><rect x="6.6" y="8.2" width="3" height="0.7" fill="#aaa"/><rect x="7" y="10.4" width="14" height="0.7" fill="#d2d2d2"/><rect x="7" y="12" width="22" height="0.7" fill="#d2d2d2"/><rect x="7" y="13.6" width="19" height="0.7" fill="#d2d2d2"/><rect x="7" y="15.2" width="18" height="0.7" fill="#d2d2d2"/></svg>
  <span class="num" style="right:-276.8px;transform:scaleX(0.9);transform-origin:100% 50%;font-size:12.6px;top:597.0px;color:#5a5a5a;">21</span>
  <svg class="abs" style="left:268.3px;top:610.2px" width="8.4" height="8.4" viewBox="0 0 10 10"><path d="M5 0.6 L6.2 3.8 L9.6 3.9 L6.9 6 L7.9 9.3 L5 7.4 L2.1 9.3 L3.1 6 L0.4 3.9 L3.8 3.8 Z" fill="#5a5a5a"/></svg>
  <svg class="abs" style="left:288.3px;top:598.8px;background:#fff;outline:0.6px solid #dcdadb;" width="37.2" height="21.8" viewBox="0 0 38 22.5" preserveAspectRatio="none"><rect x="5.6" y="11.4" width="27" height="0.7" fill="#a5a5a5"/></svg>
  </div>
  <!--PANE-->
  
  <div class="abs" id="pg3" style="left:-262px;top:-18px;width:0;height:0;">
  <div class="abs" style="left:365.5px;top:241px;width:481.5px;height:271px;background:#fefefe;box-shadow:0 0 0 0.8px #dedcdd;"></div>
  <svg class="abs" style="left:366px;top:290px" width="140" height="210" viewBox="366 290 140 210">
    <defs>
      <clipPath id="pentclip"><path d="M372.3 296.2 H443.2 L500 394 L441.4 491.8 H372.3 Z"/></clipPath>
      <radialGradient id="bgA" gradientUnits="userSpaceOnUse" cx="398" cy="300" r="150">
        <stop offset="0" stop-color="#1b5a86"/><stop offset="0.28" stop-color="#13355e"/><stop offset="0.52" stop-color="#0a1a33"/><stop offset="0.78" stop-color="#03070e"/><stop offset="1" stop-color="#010203"/>
      </radialGradient>
      <linearGradient id="blueS" x1="0" y1="0" x2="0" y2="1">
        <stop offset="0" stop-color="#2f9be2"/><stop offset="0.55" stop-color="#278cd6"/><stop offset="1" stop-color="#1b6db2"/>
      </linearGradient>
      <linearGradient id="bgL" gradientUnits="userSpaceOnUse" x1="398" y1="0" x2="446" y2="0">
        <stop offset="0" stop-color="#143a5e" stop-opacity="0.85"/><stop offset="1" stop-color="#0a1a30" stop-opacity="0"/>
      </linearGradient>
      <filter id="b1" x="-10%" y="-10%" width="120%" height="120%"><feGaussianBlur stdDeviation="0.6"/></filter>
      <filter id="b2" x="-10%" y="-10%" width="120%" height="120%"><feGaussianBlur stdDeviation="0.4"/></filter>
    </defs>
    <g clip-path="url(#pentclip)">
      <rect x="372" y="296" width="130" height="197" fill="url(#bgA)"/>
      <rect x="398" y="296" width="50" height="197" fill="url(#bgL)"/>
      <rect x="372" y="296" width="13.2" height="197" fill="#2e2d31"/>
      <rect x="385.2" y="296" width="12.7" height="197" fill="url(#blueS)"/>
      <rect x="397.2" y="296" width="1.4" height="197" fill="#1a5f92" opacity="0.8"/>
      <g id="codel" filter="url(#b1)" font-family="Liberation Mono, monospace" font-weight="bold" fill="#cfe9f4" stroke="#cfe9f4" stroke-width="0.3" font-size="7.6">
        <text x="404" y="300.4" textLength="42" lengthAdjust="spacingAndGlyphs" fill="#9ec5d6" stroke="none" font-size="6.6">appEnd.quHtt::</text>
        <text x="398.8" y="312" textLength="55" lengthAdjust="spacingAndGlyphs" font-size="8.4">■,)() wew Isege: c.(();)()</text>
        <text x="398.8" y="338.4" textLength="15.4" lengthAdjust="spacingAndGlyphs" font-size="8.4">l()p a-</text>
        <text x="447" y="343.4" textLength="24" lengthAdjust="spacingAndGlyphs" font-size="7" transform="rotate(4 447 343)">ecc.(laws.</text>
        <text x="398.8" y="350.6" textLength="14" lengthAdjust="spacingAndGlyphs" font-size="8">l)).a</text>
        <text x="452.8" y="357" textLength="9" lengthAdjust="spacingAndGlyphs" font-size="7">.)()</text>
        <text x="398.8" y="365.6" textLength="13" lengthAdjust="spacingAndGlyphs" font-size="8.4">l fee (</text>
        <text x="452.6" y="366" textLength="29" lengthAdjust="spacingAndGlyphs" font-size="7.6" transform="rotate(3 452 366)">ts::-| a.lium()</text>
        <text x="398.8" y="380.6" textLength="13.6" lengthAdjust="spacingAndGlyphs" font-size="8.4">s.Imgs</text>
        <text x="452.6" y="380" textLength="32" lengthAdjust="spacingAndGlyphs" font-size="7.6" fill="#b4d9dc" stroke="#b4d9dc" transform="rotate(1 452 380)">t.layec().(lsem</text>
        <text x="398.8" y="393" textLength="13.4" lengthAdjust="spacingAndGlyphs" font-size="8.6">prEl:w</text>
        <text x="398.8" y="421" textLength="12.6" lengthAdjust="spacingAndGlyphs" font-size="8.4">wmtas (</text>
        <text x="452.4" y="417" textLength="34" lengthAdjust="spacingAndGlyphs" font-size="7.6" transform="rotate(-5 452 417)">cc bef; il a.000 !</text>
        <text x="453" y="428" textLength="30" lengthAdjust="spacingAndGlyphs" font-size="7.6" transform="rotate(-6 453 428)">s.dbs: s.d0(s.dl</text>
        <text x="399.2" y="433.6" textLength="13.6" lengthAdjust="spacingAndGlyphs" font-size="6.6" fill="#4f9db0" stroke="none">l()tolses</text>
        <text x="400.6" y="481.4" textLength="62" lengthAdjust="spacingAndGlyphs" font-size="8.6" transform="rotate(-8.5 400 481)">lN l a.lmgth: (s e[i]) a.dbgr</text>
      </g>
      <rect x="386.8" y="402.4" width="3.6" height="1.5" fill="#86caf4" filter="url(#b2)"/>
    </g>
    <g filter="url(#b2)">
      <path d="M413.2 350.4 H451.9 L448.7 451.4 L432.6 463.6 L416.5 451.4 Z" fill="#ea5220"/>
      <path d="M432.6 350.4 H451.9 L448.7 451.4 L432.6 463.6 Z" fill="#ee5c26"/>
      <path d="M420.5 371 H445.6 V379.2 H429.2 V390 H444.9 L444.4 430.8 L432.7 442.8 L421.6 430.8 V418.4 H429 V426.4 L432.7 430.2 L436.9 426.4 V399.4 H420.5 Z" fill="#fbf6f2"/>
      <text x="414.4" y="345" textLength="34.6" lengthAdjust="spacingAndGlyphs" font-family="Liberation Sans, sans-serif" font-weight="bold" font-size="28.6" fill="#fdfdfd" stroke="#fdfdfd" stroke-width="1.5" stroke-linejoin="round">HTML</text>
    </g>
  </svg>
  <span class="t" id="s0" style="left:513px;top:272.7px;font-size:16.4px;transform:scaleX(0.831);color:#151515;font-weight:bold;-webkit-text-stroke:0.45px #151515;">FRONT END DEVELOPMENT</span>
  <span class="t" id="s1" style="left:519.1px;top:300.1px;font-size:14.6px;transform:scaleX(0.935);color:#1a1a1a;font-weight:bold;font-family:'Liberation Serif',serif;">Syntax:</span>
  <span class="t" id="s2" style="left:519.1px;top:316.7px;font-size:14.6px;transform:scaleX(0.958);color:#1a1a1a;font-weight:bold;font-family:'Liberation Serif',serif;">&lt;tagname&gt; content &lt;/tagname&gt;</span>
  <span class="t" id="s3" style="left:519.1px;top:350.3px;font-size:14.6px;transform:scaleX(0.931);color:#1a1a1a;font-weight:bold;font-family:'Liberation Serif',serif;">Tags</span>
  <span class="t" id="s4" style="left:519.1px;top:366.7px;font-size:14.6px;transform:scaleX(0.953);color:#2a2a2a;font-family:'Liberation Serif',serif;">Heading</span>
  <span class="t" id="s5" style="left:594.1px;top:366.7px;font-size:14.6px;transform:scaleX(0.968);color:#2a2a2a;font-family:'Liberation Serif',serif;">&lt;h1&gt;------&lt;/h1&gt;</span>
  <span class="t" id="s6" style="left:519.1px;top:383.7px;font-size:14.6px;transform:scaleX(0.953);color:#2a2a2a;font-family:'Liberation Serif',serif;">Paragraph</span>
  <span class="t" id="s7" style="left:594.1px;top:383.7px;font-size:14.6px;transform:scaleX(0.963);color:#2a2a2a;font-family:'Liberation Serif',serif;">&lt;p&gt;------&lt;/p&gt;</span>
  <span class="t" id="s8" style="left:519.1px;top:400.7px;font-size:14.6px;transform:scaleX(0.941);color:#2a2a2a;font-family:'Liberation Serif',serif;">Anchor</span>
  <span class="t" id="s9" style="left:594.1px;top:400.7px;font-size:14.6px;transform:scaleX(0.964);color:#2a2a2a;font-family:'Liberation Serif',serif;">&lt;a herf = “ ” &gt;------&lt;/a&gt;</span>
  <span class="t" id="s10" style="left:519.1px;top:417.7px;font-size:14.6px;transform:scaleX(0.933);color:#2a2a2a;font-family:'Liberation Serif',serif;">Image</span>
  <span class="t" id="s11" style="left:594.1px;top:417.7px;font-size:14.6px;transform:scaleX(0.958);color:#2a2a2a;font-family:'Liberation Serif',serif;">&lt;img src=“url” alt=“ alternate text”&gt;</span>
  <svg class="abs" style="left:500px;top:320px" width="320" height="120" viewBox="500 320 320 120"><path d="M527 331.4 L528.7 330.3 L530.4 331.4 L532.1 330.3 L533.8 331.4 L535.5 330.3 L537.2 331.4 L538.9 330.3 L540.6 331.4 L542.3 330.3 L544.0 331.4 L545.7 330.3 L547.4 331.4 L549.1 330.3 L550.8 331.4 L552.5 330.3 L554.2 331.4 L555.9 330.3 L557.6 331.4 L559.3 330.3 L561.0 331.4 L562.7 330.3 L564.4 331.4 L566.1 330.3 L567.8 331.4 L569.5 330.3 L571.2 331.4 L572.9 330.3 L574.6 331.4 L576.3 330.3 L578.0 331.4" fill="none" stroke="#e2574c" stroke-width="0.7"/><path d="M650 331.4 L651.7 330.3 L653.4 331.4 L655.1 330.3 L656.8 331.4 L658.5 330.3 L660.2 331.4 L661.9 330.3 L663.6 331.4 L665.3 330.3 L667.0 331.4 L668.7 330.3 L670.4 331.4 L672.1 330.3 L673.8 331.4 L675.5 330.3 L677.2 331.4 L678.9 330.3 L680.6 331.4 L682.3 330.3 L684.0 331.4 L685.7 330.3 L687.4 331.4 L689.1 330.3 L690.8 331.4 L692.5 330.3 L694.2 331.4 L695.9 330.3 L697.6 331.4 L699.3 330.3 L701.0 331.4" fill="none" stroke="#e2574c" stroke-width="0.7"/><path d="M612 415 L613.7 413.9 L615.4 415.0 L617.1 413.9 L618.8 415.0 L620.5 413.9 L622.2 415.0 L623.9 413.9 L625.6 415.0 L627.3 413.9 L629.0 415.0 L630.7 413.9 L632.4 415.0 L633.8 413.9" fill="none" stroke="#e2574c" stroke-width="0.7"/><path d="M602 432 L603.7 430.9 L605.4 432.0 L607.1 430.9 L608.8 432.0 L610.5 430.9 L612.2 432.0 L613.9 430.9 L615.6 432.0 L617.3 430.9 L619.0 432.0 L620.7 430.9 L622.4 432.0 L623.7 430.9" fill="none" stroke="#e2574c" stroke-width="0.7"/><path d="M627.2 432 L628.9 430.9 L630.6 432.0 L632.3 430.9 L634.0 432.0 L635.7 430.9 L637.4 432.0 L639.1 430.9 L640.8 432.0 L642.5 430.9 L643.3 432.0" fill="none" stroke="#e2574c" stroke-width="0.7"/><path d="M656.4 432 L658.1 430.9 L659.8 432.0 L661.5 430.9 L663.2 432.0 L664.9 430.9 L666.6 432.0 L668.3 430.9 L670.0 432.0 L671.7 430.9 L673.0 432.0" fill="none" stroke="#e2574c" stroke-width="0.7"/></svg>
  <!-- notes -->
  <div class="abs" style="left:358px;top:616px;width:497px;height:1px;background:#d5d3d4;"></div>
  <div class="abs" style="left:358px;top:625px;width:497px;height:1px;background:#efedee;"></div>
  <span class="t" id="n1" style="left:366.6px;top:623.4px;font-size:12px;transform:scaleX(0.962);color:#5c5c5c;">Click to add notes</span>
  </div>
  <!--SLIDE-->
  
  <div class="abs" id="pg4" style="left:-262px;top:-18px;width:0;height:0;">
  <div class="abs" style="left:262px;top:644.6px;width:603px;height:16px;background:#f2f0f1;"></div>
  <div class="abs" style="left:684.6px;top:644.6px;width:24.4px;height:16px;background:#cfcdce;"></div>
  <svg class="abs" style="left:262px;top:644px" width="603" height="16" viewBox="262 644 603 16">
    <!-- spellcheck book -->
    <g stroke="#777" stroke-width="0.8" fill="none">
      <path d="M329.4 648.8 H334 V657 H329.4 Z M334 648.8 H338.4 V657 H334"/>
      <path d="M336.6 651.4 L339.8 655 M339.8 651.4 L336.6 655" stroke="#666"/>
    </g>
    <!-- notes icon -->
    <path d="M491.4 655.2 H499.6 M492.4 653.4 H498.6 M493.4 651.6 H497.6" stroke="#777" stroke-width="1"/>
    <path d="M495.5 648.4 L497.4 650.6 H493.6 Z" fill="#777"/>
    <!-- comments icon -->
    <path d="M539 648.2 H549.6 V655 H543.6 L541.4 657.2 V655 H539 Z" fill="#4a4a4a"/>
    <!-- view icons -->
    <g stroke="#7a7a7a" stroke-width="0.9" fill="none">
      <rect x="612.6" y="648.4" width="9.6" height="9"/>
      <rect x="615" y="650.4" width="5.4" height="3.4"/>
      <path d="M614.4 655.6 H620.4"/>
      <rect x="638.6" y="648.4" width="3.6" height="3.2"/><rect x="644.4" y="648.4" width="3.6" height="3.2"/>
      <rect x="638.6" y="654" width="3.6" height="3.2"/><rect x="644.4" y="654" width="3.6" height="3.2"/>
      <path d="M665.4 649.4 H670 V657 H665.4 Z M670 649.4 H675 V657 H670"/>
      <path d="M666.6 651.4 H669 M666.6 653.2 H669 M671.4 651.4 H673.8 M671.4 653.2 H673.8"/>
    </g>
    <g stroke="#666" stroke-width="1" fill="none">
      <path d="M691.4 648.4 H702.4"/>
      <rect x="692.6" y="649.4" width="8.6" height="5"/>
      <path d="M697 654.4 V657.4 M694.6 657.6 H699.4"/>
    </g>
    <!-- zoom slider -->
    <path d="M714.4 653 H719.4" stroke="#555" stroke-width="1.3"/>
    <path d="M723 653 H800.6" stroke="#c9c7c8" stroke-width="1"/>
    <path d="M762.4 651.4 V654.6" stroke="#c9c7c8" stroke-width="1"/>
    <rect x="739.2" y="648.6" width="3.2" height="9" fill="#5a5a5a"/>
    <path d="M803.8 653 H810.4 M807.1 649.8 V656.2" stroke="#555" stroke-width="1.2"/>
    <!-- fit -->
    <g stroke="#7a7a7a" stroke-width="0.9" fill="none">
      <rect x="844.6" y="648.4" width="8.8" height="9"/>
      <path d="M846.2 650 L848 651.8 M851.8 650 L850 651.8 M846.2 655.8 L848 654 M851.8 655.8 L850 654"/>
    </g>
  </svg>
  <span class="t" id="st1" style="left:266px;top:649.4px;font-size:8.6px;transform:scaleX(0.943);color:#3a3a3a;">Slide 12 of 21</span>
  <span class="t" id="st2" style="left:351px;top:649.4px;font-size:8.6px;transform:scaleX(0.927);color:#3a3a3a;">English (India)</span>
  <span class="t" id="st3" style="left:503px;top:649.3px;font-size:8.8px;transform:scaleX(0.957);color:#3a3a3a;">Notes</span>
  <span class="t" id="st4" style="left:552px;top:649.3px;font-size:8.8px;transform:scaleX(0.907);color:#3a3a3a;">Comments</span>
  <span class="t" id="st5" style="left:818px;top:649.7px;font-size:8.4px;transform:scaleX(0.882);color:#555;">48%</span>
  </div>
  <!--STATUS-->
</div>

<div class="abs" id="people" style="left:0;top:0;width:0;height:0;filter:blur(0.4px);">
<div class="av" style="left:1092.3px;top:68.0px;width:17.6px;height:17.6px;line-height:17.9px;background:#f8d5db;color:#93303f;font-size:7.2px;letter-spacing:-0.3px;-webkit-text-stroke:0.2px currentColor;">MJ</div>
<span class="t" id="pn0" style="left:1076.3px;top:94.3px;font-size:9.9px;transform:scaleX(1.048);color:#f4f4f4;-webkit-text-stroke:0.38px #f4f4f4;">M. jothil...</span>
<div class="av" style="left:1157.4px;top:68.0px;width:17.6px;height:17.6px;line-height:17.9px;background:#ceeade;color:#2f6a4e;font-size:7.2px;letter-spacing:-0.3px;-webkit-text-stroke:0.2px currentColor;">GG</div>
<span class="t" id="pn1" style="left:1141.9px;top:94.3px;font-size:9.9px;transform:scaleX(1.024);color:#f4f4f4;-webkit-text-stroke:0.38px #f4f4f4;">gokulakr...</span>
<svg class="abs" style="left:1093.0px;top:133.3px" width="17.6" height="17.6" viewBox="0 0 17.6 17.6"><defs><clipPath id="avc"><circle cx="8.8" cy="8.8" r="8.6"/></clipPath><filter id="avb"><feGaussianBlur stdDeviation="0.7"/></filter></defs><g clip-path="url(#avc)"><rect width="17.6" height="17.6" fill="#20161a"/><g filter="url(#avb)"><rect x="10" y="3" width="8" height="9" fill="#3c222c"/><path d="M-1 3.5 Q3.4 2.6 4.6 6 L5.4 12 L-1 16 Z" fill="#cfcdd2"/><path d="M-1 18 L0.4 12.4 Q4 10.4 7 10.6 L11.6 8.6 Q16 10.6 18.4 13.4 V18 Z" fill="#c6c8d8"/><ellipse cx="7.9" cy="6.6" rx="2.5" ry="3.3" fill="#a87a64"/><path d="M4.8 5.4 Q5.4 1.8 8.4 2.2 Q11.4 2.6 10.8 6 Q9.6 4 7.8 4.2 Q6 4.2 4.8 5.4 Z" fill="#1c1412"/><path d="M6 8.6 Q7.8 11 9.8 8.6 Q9.2 10.6 7.8 10.6 Q6.6 10.6 6 8.6 Z" fill="#5a3c30"/></g></g></svg>
<span class="t" id="pn2" style="left:1076.3px;top:159.2px;font-size:9.9px;transform:scaleX(0.931);color:#f4f4f4;-webkit-text-stroke:0.38px #f4f4f4;">SATHISH.S</span>
<div class="av" style="left:1157.4px;top:133.3px;width:17.6px;height:17.6px;line-height:17.9px;background:#d0ebe0;color:#2f6a4e;font-size:7.2px;letter-spacing:-0.3px;-webkit-text-stroke:0.2px currentColor;">K</div>
<span class="t" id="pn3" style="left:1141.9px;top:159.2px;font-size:9.9px;transform:scaleX(0.913);color:#f4f4f4;-webkit-text-stroke:0.38px #f4f4f4;">K.SAKTHI</span>
<div class="av" style="left:1092.3px;top:198.5px;width:17.6px;height:17.6px;line-height:17.9px;background:#f7d5cd;color:#8a2a20;font-size:7.2px;letter-spacing:-0.3px;-webkit-text-stroke:0.2px currentColor;">MM</div>
<span class="t" id="pn4" style="left:1076.3px;top:224.8px;font-size:9.9px;transform:scaleX(1.013);color:#f4f4f4;-webkit-text-stroke:0.38px #f4f4f4;">M Mahal...</span>
<div class="av" style="left:1157.4px;top:198.5px;width:17.6px;height:17.6px;line-height:17.9px;background:#f4d3dd;color:#8a2048;font-size:7.2px;letter-spacing:-0.3px;-webkit-text-stroke:0.2px currentColor;">HS</div>
<span class="t" id="pn5" style="left:1141.9px;top:224.8px;font-size:9.9px;transform:scaleX(0.927);color:#f4f4f4;-webkit-text-stroke:0.38px #f4f4f4;">HARI S</span>
<div class="av" style="left:1092.3px;top:264.2px;width:17.6px;height:17.6px;line-height:17.9px;background:#f7e6b6;color:#7a5a0a;font-size:7.2px;letter-spacing:-0.3px;-webkit-text-stroke:0.2px currentColor;">GN</div>
<span class="t" id="pn6" style="left:1076.3px;top:290.4px;font-size:9.9px;transform:scaleX(1.000);color:#f4f4f4;-webkit-text-stroke:0.38px #f4f4f4;">gangara...</span>
<div class="av" style="left:1157.4px;top:264.2px;width:17.6px;height:17.6px;line-height:17.9px;background:#f6d3d9;color:#a03a4a;font-size:7.2px;letter-spacing:-0.3px;-webkit-text-stroke:0.2px currentColor;">YM</div>
<div class="abs" style="left:1139px;top:288.2px;width:51.8px;height:14.5px;background:#5c60b4;border-radius:1.5px;"></div>
<span class="t" id="pn7" style="left:1141.9px;top:290.4px;font-size:9.9px;transform:scaleX(0.935);color:#f4f4f4;-webkit-text-stroke:0.38px #f4f4f4;">YUVASH...</span>
<div class="av" style="left:1092.3px;top:329.0px;width:17.6px;height:17.6px;line-height:17.9px;background:#ccd9f1;color:#2a3f7a;font-size:7.2px;letter-spacing:-0.3px;-webkit-text-stroke:0.2px currentColor;">SS</div>
<span class="t" id="pn8" style="left:1076.3px;top:355.6px;font-size:9.9px;transform:scaleX(0.974);color:#f4f4f4;-webkit-text-stroke:0.38px #f4f4f4;">Sri Sabari</span>
<div class="av" style="left:1157.4px;top:329.0px;width:17.6px;height:17.6px;line-height:17.9px;background:#d0e6db;color:#3a6a52;font-size:7.2px;letter-spacing:-0.3px;-webkit-text-stroke:0.2px currentColor;">SS</div>
<span class="t" id="pn9" style="left:1141.9px;top:355.6px;font-size:9.9px;transform:scaleX(0.931);color:#f4f4f4;-webkit-text-stroke:0.38px #f4f4f4;">Sandhiya S</span>
<div class="av" style="left:1092.3px;top:394.5px;width:17.6px;height:17.6px;line-height:17.9px;background:#f8e5bb;color:#7a5a0a;font-size:7.2px;letter-spacing:-0.3px;-webkit-text-stroke:0.2px currentColor;">SE</div>
<span class="t" id="pn10" style="left:1076.3px;top:420.8px;font-size:9.9px;transform:scaleX(0.951);color:#f4f4f4;-webkit-text-stroke:0.38px #f4f4f4;">sandhiya E</span>
<div class="av" style="left:1157.4px;top:394.5px;width:17.6px;height:17.6px;line-height:17.9px;background:#e3e6df;color:#55604f;font-size:7.2px;letter-spacing:-0.3px;-webkit-text-stroke:0.2px currentColor;">A</div>
<span class="t" id="pn11" style="left:1141.9px;top:420.8px;font-size:9.9px;transform:scaleX(1.036);color:#f4f4f4;-webkit-text-stroke:0.38px #f4f4f4;">Arvindh</span>
<div class="av" style="left:1092.3px;top:459.9px;width:17.6px;height:17.6px;line-height:17.9px;background:#dbe8f0;color:#3d5f78;font-size:7.2px;letter-spacing:-0.3px;-webkit-text-stroke:0.2px currentColor;">S</div>
<span class="t" id="pn12" style="left:1076.3px;top:486.4px;font-size:9.9px;transform:scaleX(0.945);color:#f4f4f4;-webkit-text-stroke:0.38px #f4f4f4;">Sathish.S</span>
<svg class="abs" style="left:1157.4px;top:459.9px" width="17.6" height="17.6" viewBox="0 0 17.6 17.6"><circle cx="8.8" cy="8.8" r="8.8" fill="#356f88"/><circle cx="8.9" cy="6.6" r="1.5" fill="none" stroke="#e8f1f5" stroke-width="0.9"/><path d="M5.2 9.6 H12.6" stroke="#e8f1f5" stroke-width="1.1"/><path d="M6 11.8 H11.8" stroke="#c7dbe4" stroke-width="0.9" stroke-dasharray="1.4 0.6"/></svg>
<span class="t" id="pn13" style="left:1141.9px;top:486.4px;font-size:9.9px;transform:scaleX(0.963);color:#f4f4f4;-webkit-text-stroke:0.38px #f4f4f4;">JAMUNA...</span>
<div class="av" style="left:1092.3px;top:525.4px;width:17.6px;height:17.6px;line-height:17.9px;background:#f1dcd6;color:#8a4a3c;font-size:7.2px;letter-spacing:-0.3px;-webkit-text-stroke:0.2px currentColor;">CS</div>
<span class="t" id="pn14" style="left:1076.3px;top:551.8px;font-size:9.9px;transform:scaleX(0.963);color:#f4f4f4;-webkit-text-stroke:0.38px #f4f4f4;">CHAND...</span>
<div class="av" style="left:1157.4px;top:525.4px;width:17.6px;height:17.6px;line-height:17.9px;background:#d9e8f2;color:#3d5f78;font-size:7.2px;letter-spacing:-0.3px;-webkit-text-stroke:0.2px currentColor;">GR</div>
<span class="t" id="pn15" style="left:1141.9px;top:551.8px;font-size:9.9px;transform:scaleX(0.925);color:#f4f4f4;-webkit-text-stroke:0.38px #f4f4f4;">G.Deepa...</span>
<div class="av" style="left:1092.3px;top:591.0px;width:17.6px;height:17.6px;line-height:17.9px;background:#d2e8df;color:#3f6a58;font-size:7.2px;letter-spacing:-0.3px;-webkit-text-stroke:0.2px currentColor;">N</div>
<span class="t" id="pn16" style="left:1076.3px;top:617.0px;font-size:9.9px;transform:scaleX(1.013);color:#f4f4f4;-webkit-text-stroke:0.38px #f4f4f4;">Narmadha</span>
<div class="av" style="left:1157.8px;top:591.2px;width:17.6px;height:17.6px;background:#464278;"></div>
<span class="t" id="pa17" style="left:1158.1px;top:594.9px;font-size:11.4px;transform:scaleX(0.947);color:#f4f4fa;">+75</span>
<div class="abs" style="left:70.7px;top:642.1px;width:66.3px;height:15px;background:#5c60b4;border-radius:1.5px;"></div>
<span class="t" id="pself" style="left:74.2px;top:644.4px;font-size:9.9px;transform:scaleX(0.962);color:#f4f4f4;-webkit-text-stroke:0.38px #f4f4f4;">YUVASHRI M</span>
</div>
<!--PARTICIPANTS-->

</body>
</html>
